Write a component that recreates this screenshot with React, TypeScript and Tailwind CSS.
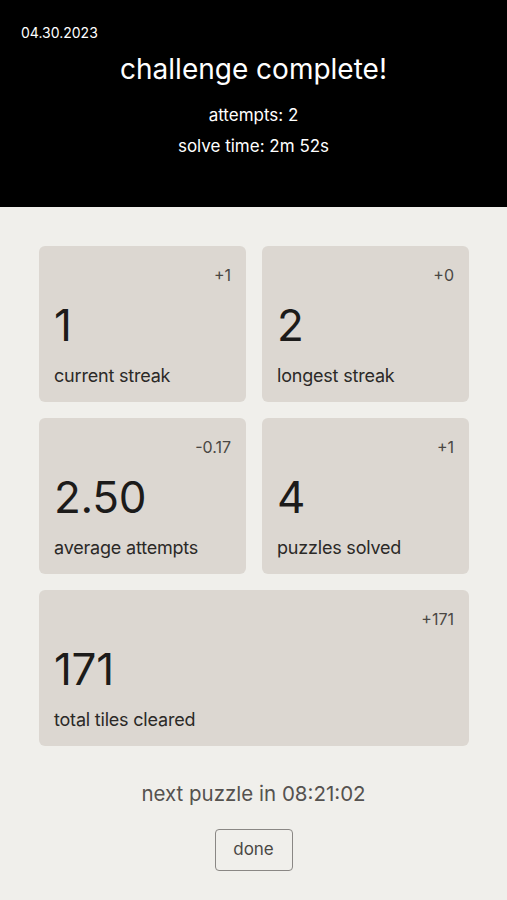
import React from "react";

type Stat = { value: string; label: string; delta: string; wide?: boolean };

const stats: Stat[] = [
  { value: "1", label: "current streak", delta: "+1" },
  { value: "2", label: "longest streak", delta: "+0" },
  { value: "2.50", label: "average attempts", delta: "-0.17" },
  { value: "4", label: "puzzles solved", delta: "+1" },
  { value: "171", label: "total tiles cleared", delta: "+171", wide: true },
];

function StatCard({ stat }: { stat: Stat }) {
  return (
    <div
      className={`h-[156px] rounded-[6px] bg-[#dcd7d1] px-[15px] pt-[18px] flex flex-col ${
        stat.wide ? "col-span-2" : ""
      }`}
    >
      <div className="text-right text-[16px] leading-[22px] text-[#4a4744]">{stat.delta}</div>
      <div className="mt-[15px] text-[44px] leading-[48px] tracking-[-0.3px] text-[#1c1b1a]">{stat.value}</div>
      <div className="mt-[16px] text-[18px] leading-[22px] tracking-[-0.2px] text-[#2b2927]">{stat.label}</div>
    </div>
  );
}

export default function App() {
  return (
    <div className="min-h-[900px] w-full bg-[#f0efeb] font-['Inter','Noto_Sans',sans-serif]">
      {/* header */}
      <div className="h-[207px] bg-black text-white px-[21px] pt-[24px]">
        <div className="text-[14px] leading-[18px]">04.30.2023</div>
        <div className="mt-[10px] text-center text-[28px] leading-[34px]">challenge complete!</div>
        <div className="mt-[18px] text-center text-[17px] leading-[22px]">attempts: 2</div>
        <div className="mt-[9px] text-center text-[17px] leading-[22px]">solve time: 2m 52s</div>
      </div>

      {/* stats */}
      <div className="grid grid-cols-2 gap-[16px] px-[39px] pt-[39px] w-[508px]">
        {stats.map((s) => (
          <StatCard key={s.label} stat={s} />
        ))}
      </div>

      <div className="mt-[34px] text-center text-[20.5px] leading-[28px] text-[#55524f]">
        next puzzle in 08:21:02
      </div>

      <div className="mt-[21px] flex justify-center">
        <button className="h-[42px] w-[78px] rounded-[4px] border border-[#8a8784] text-[17px] text-[#4a4744]">
          done
        </button>
      </div>
    </div>
  );
}
